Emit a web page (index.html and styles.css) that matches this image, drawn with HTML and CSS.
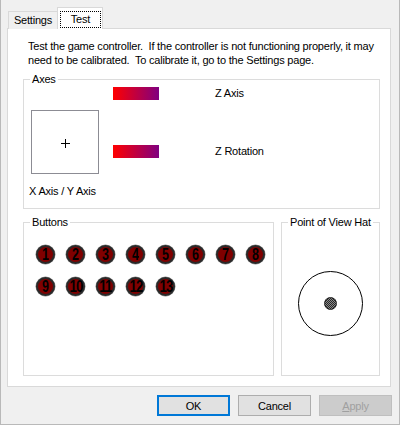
FILE: index.html
```html
<!DOCTYPE html>
<html>
<head>
<meta charset="utf-8">
<link rel="stylesheet" href="styles.css">
</head>
<body>
<div class="window">
  <div class="tabs">
    <div class="tab">Settings</div>
    <div class="tab active"><span class="focus">Test</span></div>
  </div>
  <div class="panel">
    <p class="desc">Test the game controller.&nbsp; If the controller is not functioning properly, it may<br>need to be calibrated.&nbsp; To calibrate it, go to the Settings page.</p>
    <fieldset class="group axes">
      <legend>Axes</legend>
      <div class="axes-body">
        <div class="xy-col">
          <div class="xybox">
            <svg class="plus" width="9" height="9" viewBox="0 0 9 9"><path d="M4.5 0V9M0 4.5H9" stroke="#000" stroke-width="1" fill="none"/></svg>
          </div>
          <div class="xy-label">X Axis / Y Axis</div>
        </div>
        <div class="z-col">
          <div class="zrow"><div class="bar"></div><span class="zlabel">Z Axis</span></div>
          <div class="zrow second"><div class="bar"></div><span class="zlabel">Z Rotation</span></div>
        </div>
      </div>
    </fieldset>
    <div class="lower">
      <fieldset class="group buttons">
        <legend>Buttons</legend>
        <div class="btn-grid">
          <div class="jb"><span class="num">1</span></div>
          <div class="jb"><span class="num">2</span></div>
          <div class="jb"><span class="num">3</span></div>
          <div class="jb"><span class="num">4</span></div>
          <div class="jb"><span class="num">5</span></div>
          <div class="jb"><span class="num">6</span></div>
          <div class="jb"><span class="num">7</span></div>
          <div class="jb"><span class="num">8</span></div>
          <div class="jb"><span class="num">9</span></div>
          <div class="jb"><span class="num two">10</span></div>
          <div class="jb"><span class="num two">11</span></div>
          <div class="jb"><span class="num two">12</span></div>
          <div class="jb"><span class="num two">13</span></div>
        </div>
      </fieldset>
      <fieldset class="group pov">
        <legend>Point of View Hat</legend>
        <div class="pov-body">
          <div class="pov-ring"><div class="pov-dot"></div></div>
        </div>
      </fieldset>
    </div>
  </div>
  <div class="actions">
    <button class="btn default">OK</button>
    <button class="btn">Cancel</button>
    <button class="btn disabled"><u>A</u>pply</button>
  </div>
</div>
</body>
</html>
```

FILE: styles.css
```css
html, body {
  margin: 0;
  padding: 0;
  background: #f0f0f0;
}

body {
  font-family: "Liberation Sans", Arial, sans-serif;
  font-size: 11px;
  line-height: 13px;
  letter-spacing: -0.2px;
  color: #000;
}

.window {
  width: 400px;
  height: 425px;
  box-sizing: border-box;
  background: #f0f0f0;
  border-left: 1px solid #b9b9b9;
  border-right: 1px solid #b9b9b9;
  border-bottom: 1px solid #b9b9b9;
  padding: 7px 8px 0 6px;
}

.tabs {
  display: flex;
  align-items: flex-end;
  height: 22px;
  padding-left: 1px;
}

.tab {
  box-sizing: border-box;
  width: 49px;
  height: 18px;
  border: 1px solid #d9d9d9;
  border-right: 0;
  border-bottom: 0;
  background: #f0f0f0;
  text-align: center;
  padding-top: 2px;
}

.tab.active {
  position: relative;
  z-index: 1;
  width: 46px;
  height: 22px;
  background: #fff;
  border-right: 1px solid #d9d9d9;
  padding: 3px 1px 0 2px;
  text-align: left;
}

.focus {
  display: block;
  box-sizing: border-box;
  height: 17px;
  border: 1px dotted #000;
  text-align: center;
  line-height: 13px;
  padding-top: 1px;
}

.panel {
  box-sizing: border-box;
  height: 359px;
  margin-top: -1px;
  background: #fff;
  border: 1px solid #d9d9d9;
}

.desc {
  margin: 10px 0 0 20px;
  line-height: 14px;
  white-space: nowrap;
}

.group {
  margin: 0;
  padding: 0;
  min-width: 0;
  box-sizing: border-box;
  border: 1px solid #dcdcdc;
}

.group legend {
  padding: 0 2px;
  margin-left: 6px;
  line-height: 13px;
}

.axes {
  margin: 6px 0 0 15px;
  width: 357px;
  height: 136px;
}

.axes-body {
  display: flex;
  padding-left: 7px;
}

.xy-col {
  margin-top: 24px;
}

.xybox {
  box-sizing: border-box;
  width: 68px;
  height: 64px;
  border: 1px solid #8c8c94;
  background: #fff;
  padding: 28px 0 0 29px;
}

.plus {
  display: block;
}

.xy-label {
  margin: 11px 0 0 -2px;
  white-space: nowrap;
}

.z-col {
  margin: 1px 0 0 14px;
}

.zrow {
  display: flex;
  align-items: center;
  height: 13px;
}

.zrow.second {
  margin-top: 45px;
}

.bar {
  width: 46px;
  height: 13px;
  background: linear-gradient(to right, #ff0000, #800080);
}

.zlabel {
  margin-left: 56px;
  white-space: nowrap;
}

.lower {
  display: flex;
  margin: 7px 0 0 15px;
}

.buttons {
  width: 251px;
  height: 160px;
}

.btn-grid {
  display: grid;
  grid-template-columns: repeat(8, 19px);
  column-gap: 11px;
  row-gap: 13px;
  margin: 16px 0 0 12px;
}

.jb {
  box-sizing: border-box;
  width: 19px;
  height: 19px;
  border-radius: 50%;
  background: #800000;
  border: 2px solid #2a2a2a;
  box-shadow: 0 0 0 0.5px #8a8a8a;
  display: flex;
  align-items: center;
  justify-content: center;
  overflow: visible;
}

.num {
  display: inline-block;
  font-family: "Liberation Sans", Arial, sans-serif;
  font-weight: bold;
  font-size: 16px;
  line-height: 1;
  letter-spacing: 0;
  color: #000;
  transform: scaleX(0.78);
}

.num.two {
  letter-spacing: -1px;
  transform: scaleX(0.82);
}

.pov {
  width: 99px;
  height: 160px;
  margin-left: 7px;
}

.pov-body {
  display: flex;
  align-items: center;
  justify-content: center;
  height: 146px;
  padding-top: 2px;
  box-sizing: border-box;
  padding-right: 1px;
}

.pov-ring {
  box-sizing: border-box;
  width: 65px;
  height: 65px;
  border: 1px solid #000;
  border-radius: 50%;
  display: flex;
  align-items: center;
  justify-content: center;
}

.pov-dot {
  box-sizing: border-box;
  width: 13px;
  height: 13px;
  border-radius: 50%;
  border: 1px solid #1e1e1e;
  background: repeating-conic-gradient(#262626 0 25%, #8a8a8a 0 50%) 0 0 / 2px 2px;
}

.actions {
  display: flex;
  justify-content: flex-end;
  gap: 8px;
  margin: 8px -1px 0 0;
}

.btn {
  box-sizing: border-box;
  width: 73px;
  height: 21px;
  margin: 0;
  padding: 0;
  font-family: "Liberation Sans", Arial, sans-serif;
  font-size: 11px;
  letter-spacing: -0.2px;
  color: #000;
  background: #e1e1e1;
  border: 1px solid #adadad;
  border-radius: 0;
}

.btn.default {
  border: 2px solid #0078d7;
}

.btn.disabled {
  background: #cccccc;
  border-color: #bfbfbf;
  color: #a0a0a0;
}
```
